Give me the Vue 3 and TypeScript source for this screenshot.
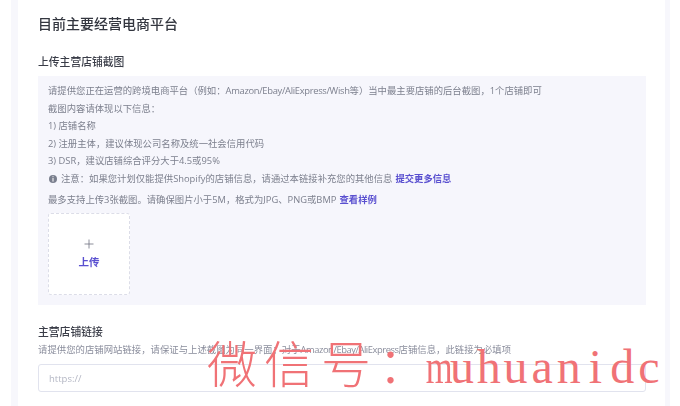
<script setup lang="ts">
const lines: string[] = [
  '截图内容请体现以下信息：',
  '1) 店铺名称',
  '2) 注册主体，建议体现公司名称及统一社会信用代码',
  '3) DSR，建议店铺综合评分大于4.5或95%',
]
const handle: string[] = 'muhuanidc'.split('')
</script>

<template>
  <div class="page">
    <div class="band">
      <main class="card">
        <h1 class="title">目前主要经营电商平台</h1>
        <section class="upload-section">
          <h2 class="label">上传主营店铺截图</h2>
          <div class="panel">
            <p class="line">请提供您正在运营的跨境电商平台（例如：<span class="brands">Amazon/Ebay/AliExpress/Wish</span>等）当中最主要店铺的后台截图，1个店铺即可</p>
            <p v-for="l in lines" :key="l" class="line">{{ l }}</p>
            <p class="line note">
              <svg class="info" viewBox="0 0 10 10" aria-hidden="true">
                <circle cx="5" cy="5" r="4" fill="#7a7f8e" />
                <rect x="4.5" y="2.2" width="1" height="1" fill="#fff" />
                <rect x="4.5" y="4" width="1" height="3.6" fill="#fff" />
              </svg>
              <span>注意：如果您计划仅能提供Shopify的店铺信息，请通过本链接补充您的其他信息</span>
              <a class="link">提交更多信息</a>
            </p>
            <p class="line limit">最多支持上传3张截图。请确保图片小于5M，格式为JPG、PNG或BMP<a class="link">查看样例</a></p>
            <div class="dropzone">
              <svg class="plus" viewBox="0 0 10 10" aria-hidden="true">
                <path d="M5 .5v9M.5 5h9" stroke="#6f7280" stroke-width=".8" fill="none" />
              </svg>
              <span class="upload-text">上传</span>
            </div>
          </div>
        </section>
        <section class="link-section">
          <h2 class="label">主营店铺链接</h2>
          <p class="hint">请提供您的店铺网站链接，请保证与上述截图为同一界面；对于<span class="brands tight">Amazon/Ebay/AliExpress</span>店铺信息，此链接为必填项</p>
          <input class="input" type="text" placeholder="https://" />
        </section>
      </main>
    </div>
    <div class="watermark">
      <span class="wm-cn">微信号：</span>
      <span class="wm-en"><span v-for="(c, i) in handle" :key="i" class="wm-char" :class="{ 'wm-wide': c === 'm' }">{{ c }}</span></span>
    </div>
  </div>
</template>

<style>
html, body { margin: 0; background: #fff; }
</style>

<style scoped>
.page {
  position: relative;
  width: 680px;
  height: 406px;
  overflow: hidden;
  background: #fff;
  font-family: "Open Sans", "Noto Sans CJK SC", sans-serif;
  padding: 0 10px 0 11px;
  box-sizing: border-box;
}
.band {
  height: 100%;
  padding: 0 5px 0 7px;
  background: #f7f7fc;
  filter: blur(0.3px);
}
.card {
  background: #fff;
  height: 100%;
  padding: 15px 19px 0 20px;
  box-sizing: border-box;
}
.title {
  margin: 0;
  font-size: 14px;
  line-height: 18px;
  font-weight: 500;
  color: #33363f;
}
.upload-section { margin-top: 21px; }
.label {
  margin: 0;
  font-size: 10.8px;
  line-height: 16px;
  font-weight: 500;
  color: #3a3d48;
}
.panel {
  margin-top: 6px;
  height: 229px;
  box-sizing: border-box;
  padding: 6px 10px 0;
  background: #f6f6fc;
}
.line {
  margin: 0;
  font-size: 9.35px;
  line-height: 17.6px;
  color: #7d808e;
  white-space: nowrap;
}
.brands { letter-spacing: -0.3px; }
.tight { letter-spacing: -0.45px; }
.note {
  display: flex;
  align-items: center;
  gap: 3px;
}
.info { width: 10px; height: 10px; }
.link {
  font-weight: 700;
  color: #5a50d0;
}
.limit .link { margin-left: 3px; }
.limit { margin-top: 3px; }
.dropzone {
  width: 82px;
  height: 82px;
  margin-top: 5px;
  box-sizing: border-box;
  border: 1px dashed #dcdde8;
  border-radius: 3px;
  background: #fff;
  display: flex;
  flex-direction: column;
  align-items: center;
  justify-content: center;
  gap: 7px;
}
.plus { width: 10px; height: 10px; }
.upload-text {
  font-size: 10.5px;
  line-height: 13px;
  font-weight: 600;
  color: #5a50d0;
}
.link-section { margin-top: 19px; }
.hint {
  margin: 3px 0 0;
  font-size: 9.4px;
  line-height: 13px;
  color: #8a8d9c;
  white-space: nowrap;
}
.input {
  display: block;
  width: 100%;
  height: 28px;
  margin-top: 8px;
  box-sizing: border-box;
  padding: 0 10px;
  border: 1px solid #e1e3ee;
  border-radius: 3px;
  background: #fff;
  font-family: inherit;
  font-size: 9.5px;
  outline: none;
}
.input::placeholder { color: #b4b7c4; }
.watermark {
  position: absolute;
  left: 207px;
  top: 331px;
  display: flex;
  align-items: baseline;
  color: #f07276;
  white-space: nowrap;
  pointer-events: none;
}
.wm-cn {
  font-family: "Noto Sans CJK SC", sans-serif;
  font-weight: 200;
  font-size: 50px;
  line-height: 60px;
  letter-spacing: 7px;
  width: 215px;
}
.wm-en {
  display: flex;
  font-family: "Liberation Serif", serif;
  font-size: 48px;
  line-height: 60px;
}
.wm-char {
  width: 26.7px;
  text-align: center;
}
.wm-wide {
  transform: scaleX(0.72);
}
</style>
